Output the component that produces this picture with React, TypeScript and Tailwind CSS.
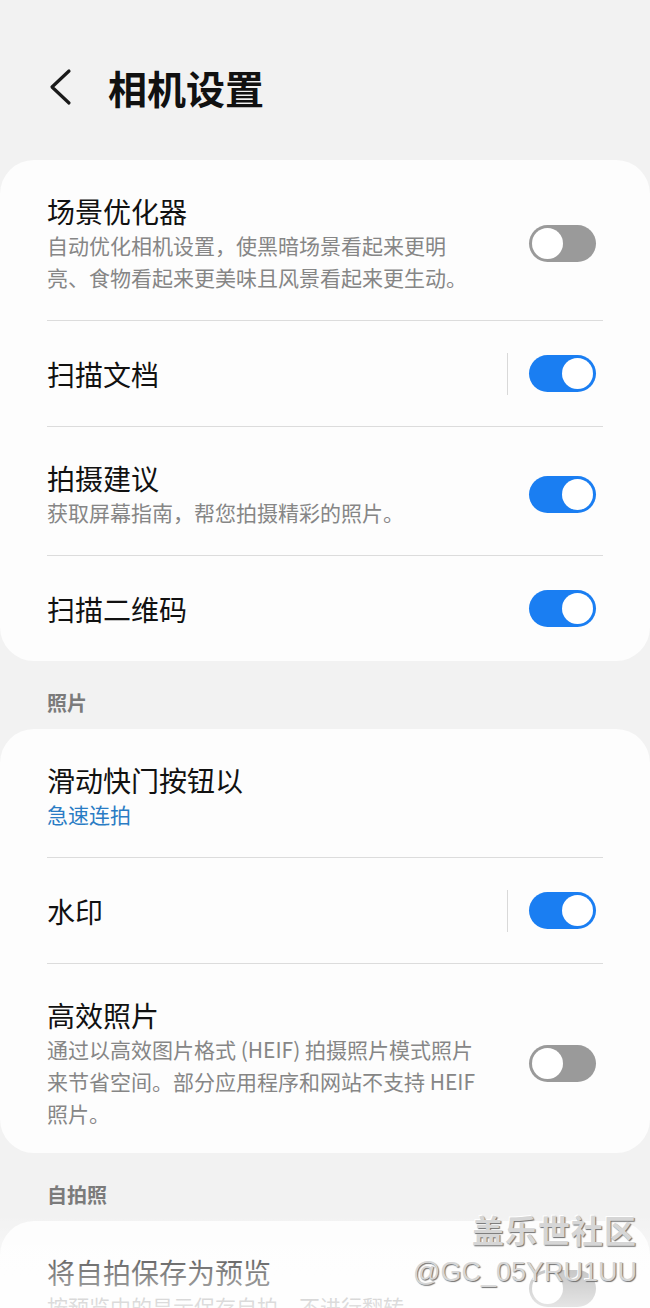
import React from 'react';

const font = { fontFamily: '"Noto Sans CJK SC", "Noto Sans", sans-serif' };

function Toggle({ on }: { on: boolean }) {
  return (
    <div className={`w-[67px] h-[37px] rounded-full flex items-center px-[3px] shrink-0 ${on ? 'bg-[#1a7ef2] justify-end' : 'bg-[#9a9a9a] justify-start'}`}>
      <div className="w-[31px] h-[31px] rounded-full bg-white" />
    </div>
  );
}

type Row = {
  title: string;
  sub?: string[];
  blue?: boolean;
  toggle?: boolean;
  split?: boolean;
  tight?: boolean;
};

function SettingRow({ row }: { row: Row }) {
  const pad = row.sub ? (row.tight ? 'pt-[33px] pb-[24px]' : 'pt-[33px] pb-[27px]') : 'min-h-[105px]';
  return (
    <div className={`flex items-center pl-[47px] pr-[54px] ${pad}`}>
      <div className="flex-1 min-w-0">
        <div className="text-[28px] leading-[36px] text-[#111111]">{row.title}</div>
        {row.sub && (
          <div className={`text-[21px] leading-[32px] ${row.blue ? 'text-[#2a7cc4]' : 'text-[#868686]'}`}>
            {row.sub.map((l, i) => (
              <div key={i} className="whitespace-nowrap">{l}</div>
            ))}
          </div>
        )}
      </div>
      {row.split && <div className="w-px h-[42px] bg-[#d9d9d9] mr-[21px]" />}
      {row.toggle !== undefined && <Toggle on={row.toggle} />}
    </div>
  );
}

function Card({ rows }: { rows: Row[] }) {
  return (
    <div className="bg-[#fdfdfd] rounded-[34px]">
      {rows.map((r, i) => (
        <div key={i}>
          {i > 0 && <div className="mx-[47px] h-px bg-[#dcdcdc]" />}
          <SettingRow row={r} />
        </div>
      ))}
    </div>
  );
}

function Header({ text }: { text: string }) {
  return (
    <div className="pl-[47px] pt-[30px] pb-[14px] text-[20px] leading-[24px] font-bold text-[#7b7b7b]">{text}</div>
  );
}

export default function App() {
  return (
    <div className="relative w-[650px] h-[1308px] overflow-hidden bg-[#f2f2f2]" style={font}>
      {/* top bar */}
      <div className="flex items-center h-[48px] mt-[63px] mb-[49px] pl-[46px]">
        <svg width="28" height="38" viewBox="0 0 28 38" className="shrink-0">
          <path d="M23 3 L6 19 L23 35" fill="none" stroke="#1a1a1a" strokeWidth="3.2" strokeLinecap="round" strokeLinejoin="round" />
        </svg>
        <div className="ml-[34px] text-[39px] leading-[48px] font-bold text-[#111111]">相机设置</div>
      </div>

      <Card
        rows={[
          {
            title: '场景优化器',
            sub: ['自动优化相机设置，使黑暗场景看起来更明', '亮、食物看起来更美味且风景看起来更生动。'],
            toggle: false,
          },
          { title: '扫描文档', toggle: true, split: true },
          { title: '拍摄建议', sub: ['获取屏幕指南，帮您拍摄精彩的照片。'], toggle: true },
          { title: '扫描二维码', toggle: true },
        ]}
      />

      <Header text="照片" />
      <Card
        rows={[
          { title: '滑动快门按钮以', sub: ['急速连拍'], blue: true },
          { title: '水印', toggle: true, split: true },
          {
            title: '高效照片',
            sub: ['通过以高效图片格式 (HEIF) 拍摄照片模式照片', '来节省空间。部分应用程序和网站不支持 HEIF', '照片。'],
            toggle: false,
            tight: true,
          },
        ]}
      />

      <Header text="自拍照" />
      <Card rows={[{ title: '将自拍保存为预览', sub: ['按预览中的显示保存自拍，不进行翻转。'], toggle: false }]} />

      {/* bottom fade */}
      <div className="absolute left-0 right-0 bottom-0 h-[95px] bg-gradient-to-b from-white/0 to-white/75" />

      {/* watermark */}
      <div className="absolute right-[13px] top-[1208px] flex flex-col items-end text-[#d6d6d6] [text-shadow:1px_1px_1px_#707070,-1px_-1px_0_#ffffff]">
        <div className="text-[32px] leading-[42px] font-bold tracking-[1px]">盖乐世社区</div>
        <div className="text-[27px] leading-[36px] mt-[4px]" style={{ fontFamily: '"Liberation Sans", sans-serif' }}>@GC_05YRU1UU</div>
      </div>
    </div>
  );
}
